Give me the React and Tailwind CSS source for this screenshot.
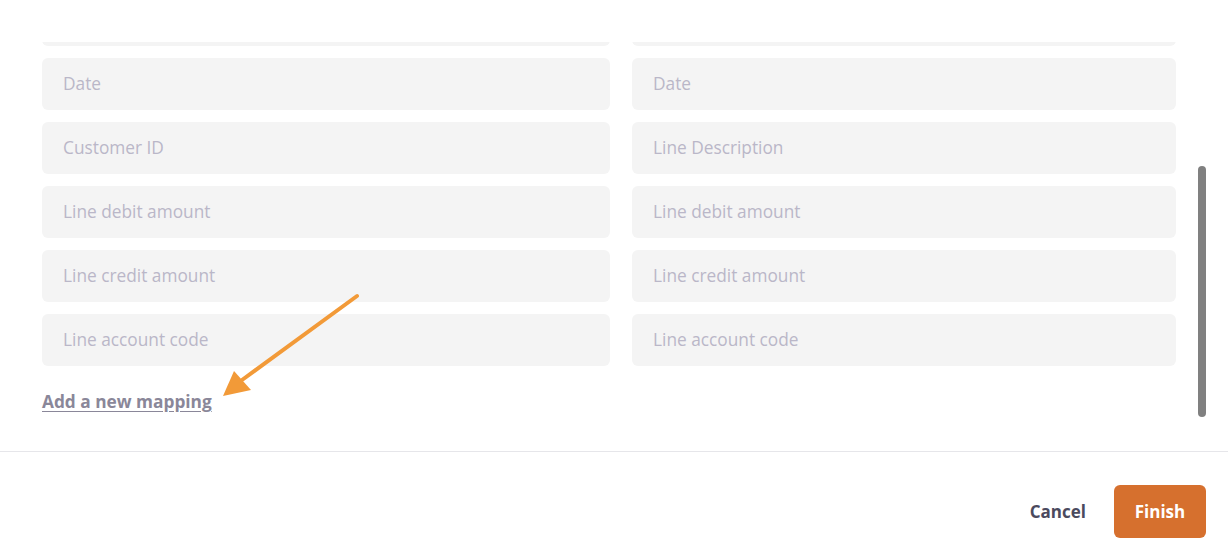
const left = ["Date", "Customer ID", "Line debit amount", "Line credit amount", "Line account code"];
const right = ["Date", "Line Description", "Line debit amount", "Line credit amount", "Line account code"];

function Field({ label }) {
  return (
    <div className="h-[52px] rounded-md bg-[#f4f4f4] flex items-center px-[21px] text-[17.3px] text-[#bab7c8]">
      {label}
    </div>
  );
}

export default function App() {
  return (
    <div className="w-[1228px] h-[559px] bg-white flex flex-col overflow-hidden" style={{ fontFamily: "'Open Sans', Lato, sans-serif" }}>
      <div className="relative h-[451px] pt-[42px]">
        <div className="h-[409px] overflow-hidden">
          <div className="-mt-[48px] pl-[42px] grid grid-cols-[568px_544px] gap-x-[22px] gap-y-[12px]">
            <Field label="" />
            <Field label="" />
            {left.map((l, i) => (
              <>
                <Field key={"l" + i} label={l} />
                <Field key={"r" + i} label={right[i]} />
              </>
            ))}
          </div>
          <div className="pl-[42px] mt-[23px]">
            <a href="#" className="text-[17.3px] font-bold text-[#8a8799] underline underline-offset-[3px]">
              Add a new mapping
            </a>
          </div>
        </div>

        {/* scrollbar */}
        <div className="absolute left-[1198px] top-[166px] w-[8px] h-[251px] rounded-full bg-[#808080]" />

        {/* annotation arrow */}
        <svg className="absolute left-0 top-0" width="1228" height="451" viewBox="0 0 1228 451">
          <line x1="357" y1="296" x2="242" y2="380" stroke="#f29a38" strokeWidth="4" strokeLinecap="round" />
          <polygon points="223,396 234,371 251,390" fill="#f29a38" />
        </svg>
      </div>

      <div className="border-t border-[#e6e6ea] flex-1 flex justify-end items-start pt-[33px] pr-[22px] gap-[28px]">
        <button className="h-[53px] text-[17px] font-bold text-[#4b4a5e]">Cancel</button>
        <button className="h-[53px] w-[92px] rounded-md bg-[#d6702e] text-[17px] font-bold text-white">Finish</button>
      </div>
    </div>
  );
}
